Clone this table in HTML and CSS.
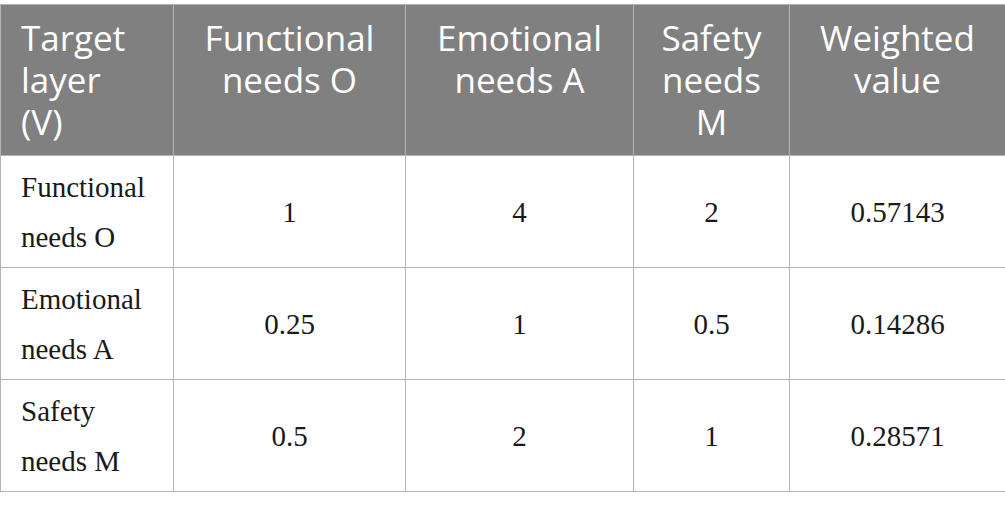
FILE: index.html
```html
<!DOCTYPE html>
<html lang="en">
<head>
<meta charset="utf-8">
<title>Table</title>
<link rel="stylesheet" href="styles.css">
</head>
<body>
<table class="ahp">
  <colgroup>
    <col class="c1"><col class="c2"><col class="c3"><col class="c4"><col class="c5">
  </colgroup>
  <thead>
    <tr>
      <th class="left">Target<br>layer<br>(V)</th>
      <th>Functional<br>needs O</th>
      <th>Emotional<br>needs A</th>
      <th>Safety<br>needs<br>M</th>
      <th>Weighted<br>value</th>
    </tr>
  </thead>
  <tbody>
    <tr>
      <td class="left">Functional<br>needs O</td>
      <td>1</td><td>4</td><td>2</td><td>0.57143</td>
    </tr>
    <tr>
      <td class="left">Emotional<br>needs A</td>
      <td>0.25</td><td>1</td><td>0.5</td><td>0.14286</td>
    </tr>
    <tr>
      <td class="left">Safety<br>needs M</td>
      <td>0.5</td><td>2</td><td>1</td><td>0.28571</td>
    </tr>
  </tbody>
</table>
</body>
</html>
```
FILE: styles.css
```css
html, body {
  margin: 0;
  padding: 0;
  background: #ffffff;
}
body {
  padding-top: 4px;
}
.ahp {
  width: 1005px;
  border-collapse: collapse;
  table-layout: fixed;
}
.c1 { width: 173px; }
.c2 { width: 232px; }
.c3 { width: 228px; }
.c4 { width: 156px; }
.c5 { width: 216px; }
.ahp th,
.ahp td {
  border: 1px solid #b4b4b4;
}
.ahp th {
  background: #808080;
  color: #ffffff;
  font-family: "Open Sans", "DejaVu Sans", sans-serif;
  font-weight: 400;
  font-size: 35px;
  line-height: 42px;
  height: 126px;
  padding: 12px 8px;
  text-align: center;
  vertical-align: top;
}
.ahp td {
  color: #1a1a1a;
  font-family: "Liberation Serif", "Times New Roman", serif;
  font-size: 29px;
  line-height: 50px;
  height: 101px;
  padding: 5px 8px;
  text-align: center;
  vertical-align: middle;
}
.ahp .left {
  text-align: left;
  padding-left: 20px;
}
```
